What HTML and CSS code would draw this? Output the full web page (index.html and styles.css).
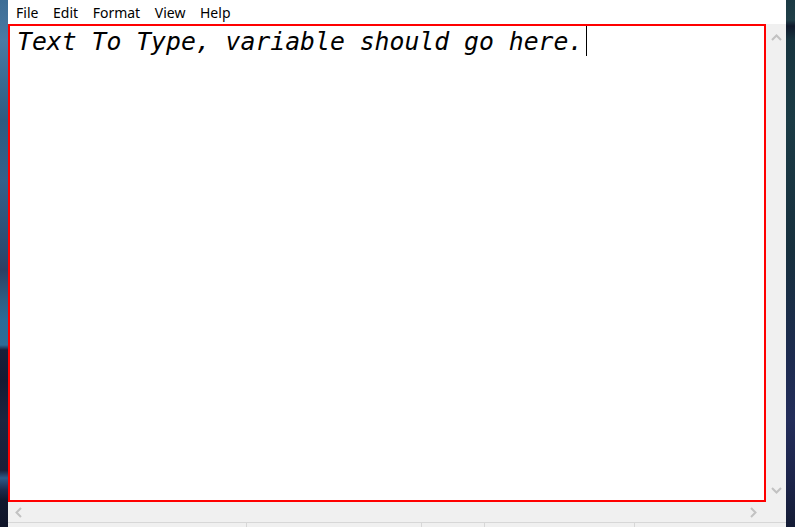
FILE: index.html
```html
<!DOCTYPE html>
<html>
<head>
<meta charset="utf-8">
<link rel="stylesheet" href="styles.css">
</head>
<body>
<div class="screen">
  <div class="desk desk-left"></div>
  <div class="window">
    <div class="menubar">
      <span class="menu-item">File</span>
      <span class="menu-item">Edit</span>
      <span class="menu-item">Format</span>
      <span class="menu-item">View</span>
      <span class="menu-item">Help</span>
    </div>
    <div class="editor-row">
      <div class="editor"><span class="text">Text To Type, variable should go here.</span><span class="caret"></span></div>
      <div class="vscroll">
        <svg class="arrow" width="11" height="7" viewBox="0 0 11 7"><path d="M1 6 L5.5 1.5 L10 6" fill="none" stroke="#c2c2c2" stroke-width="2"/></svg>
        <svg class="arrow" width="11" height="7" viewBox="0 0 11 7"><path d="M1 1 L5.5 5.5 L10 1" fill="none" stroke="#c2c2c2" stroke-width="2"/></svg>
      </div>
    </div>
    <div class="hscroll">
      <svg class="arrow" width="7" height="11" viewBox="0 0 7 11"><path d="M6 1 L1.5 5.5 L6 10" fill="none" stroke="#c2c2c2" stroke-width="2"/></svg>
      <svg class="arrow" width="7" height="11" viewBox="0 0 7 11"><path d="M1 1 L5.5 5.5 L1 10" fill="none" stroke="#c2c2c2" stroke-width="2"/></svg>
      <div class="corner"></div>
    </div>
    <div class="statusbar">
      <div class="cell c1"></div>
      <div class="cell c2"></div>
      <div class="cell c3"></div>
      <div class="cell c4"></div>
      <div class="cell c5"></div>
    </div>
  </div>
  <div class="desk desk-right"></div>
</div>
</body>
</html>
```
FILE: styles.css
```css
html, body {
  margin: 0;
  padding: 0;
  background: #ffffff;
}
.screen {
  display: flex;
  width: 795px;
  height: 527px;
  overflow: hidden;
}
.desk {
  flex: none;
  height: 100%;
}
.desk-left {
  width: 8px;
  background: linear-gradient(to bottom,
    #3d6d95 0px, #4a7aa3 40px, #3a6a92 80px, #2f5a80 120px, #35608a 180px,
    #2c4a70 250px, #2f3f63 270px, #2e5e84 300px, #2b6b98 320px, #2e6d96 345px,
    #1a1f3a 350px, #161a33 380px, #1c2540 420px, #1a1e38 470px,
    #2e5a88 478px, #1c2a4c 490px, #10182e 500px, #0f1428 527px);
}
.desk-right {
  width: 9px;
  background: linear-gradient(to bottom,
    #1b3a44 0px, #203f48 20px, #101a2c 26px, #17343f 40px, #1b3b45 120px,
    #17303e 250px, #1d2b50 360px, #232d5a 420px, #1c244a 480px, #141c35 527px);
}
.window {
  flex: none;
  width: 778px;
  height: 100%;
  display: flex;
  flex-direction: column;
  background: #ffffff;
}
.menubar {
  height: 24px;
  flex: none;
  display: flex;
  align-items: center;
  padding-left: 8px;
  font-family: "Noto Sans", "Open Sans", sans-serif;
  font-size: 14px;
  color: #000;
  box-sizing: border-box;
  padding-top: 1px;
}
.menu-item {
  margin-right: 14.6px;
}
.editor-row {
  flex: none;
  height: 478px;
  display: flex;
}
.editor {
  flex: none;
  width: 758px;
  height: 478px;
  box-sizing: border-box;
  border: 2px solid #ff0000;
  padding: 0 0 0 7px;
  font-family: "DejaVu Sans Mono", monospace;
  font-style: italic;
  font-size: 24.75px;
  line-height: 30px;
  color: #000;
  white-space: pre;
  display: flex;
  align-items: flex-start;
}
.text {
  margin-top: 1px;
}
.caret {
  display: inline-block;
  width: 1px;
  height: 30px;
  background: #000;
  margin-left: 3px;
}
.vscroll {
  flex: none;
  width: 20px;
  background: #f0f0f0;
  display: flex;
  flex-direction: column;
  justify-content: space-between;
  align-items: center;
  padding: 10px 0 8px 0;
  box-sizing: border-box;
}
.arrow {
  display: block;
}
.hscroll {
  flex: none;
  height: 20px;
  background: #f0f0f0;
  display: flex;
  align-items: center;
  padding-left: 7px;
  box-sizing: border-box;
}
.hscroll .arrow:nth-child(2) {
  margin-left: 728px;
}
.corner {
  flex: 1;
}
.statusbar {
  flex: 1;
  display: flex;
  background: #f0f0f0;
  border-top: 1px solid #d7d7d7;
}
.cell {
  flex: none;
  border-right: 1px solid #d7d7d7;
  height: 100%;
}
.c1 { width: 238px; }
.c2 { width: 174px; }
.c3 { width: 62px; }
.c4 { width: 149px; }
.c5 { flex: 1; border-right: none; }
```
